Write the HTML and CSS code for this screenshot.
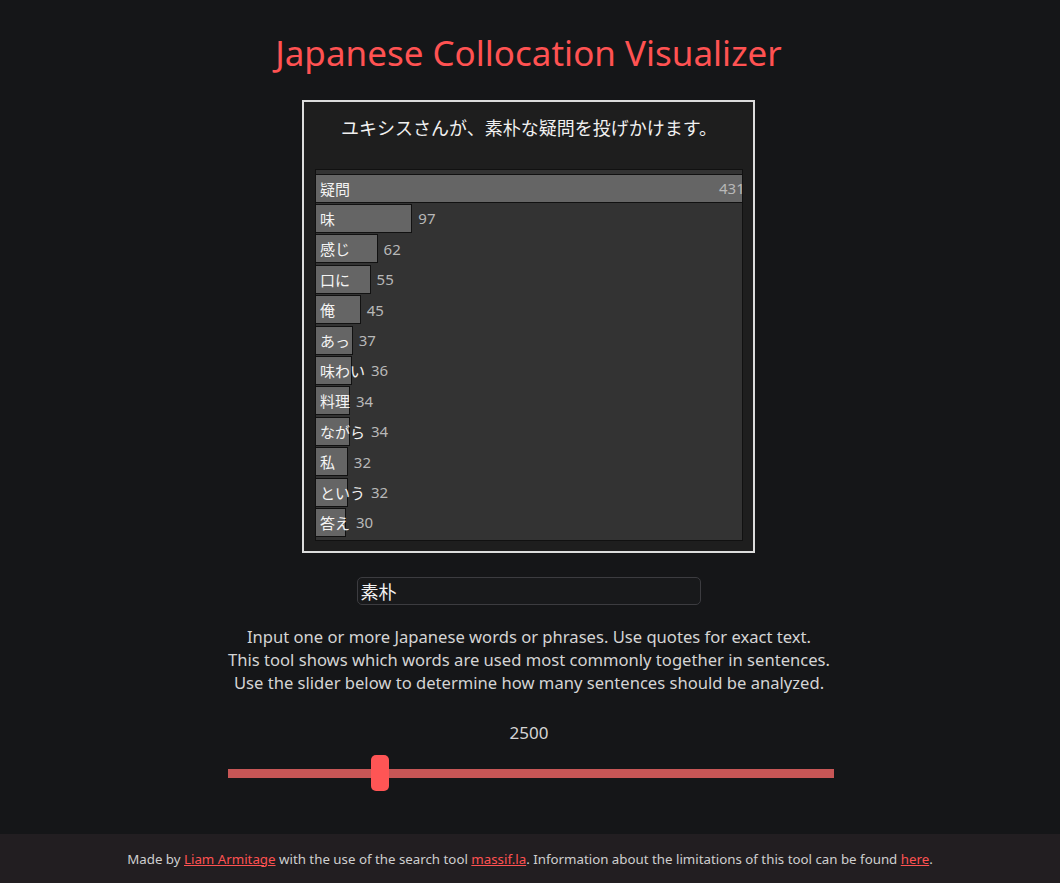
FILE: index.html
```html
<!DOCTYPE html>
<html lang="en">
<head>
<meta charset="utf-8">
<title>Japanese Collocation Visualizer</title>
<link rel="stylesheet" href="styles.css">
</head>
<body>
<main class="page">
  <h1 class="title">Japanese Collocation Visualizer</h1>
  <section class="card">
    <p class="sentence" lang="ja">ユキシスさんが、素朴な疑問を投げかけます。</p>
    <div class="chart" lang="ja">
      <div class="row row--full"><div class="item"><div class="bar" style="width:427px"></div><span class="label">疑問</span></div><span class="count">431</span></div>
      <div class="row"><div class="item"><div class="bar" style="width:96.3px"></div><span class="label">味</span></div><span class="count">97</span></div>
      <div class="row"><div class="item"><div class="bar" style="width:61.6px"></div><span class="label">感じ</span></div><span class="count">62</span></div>
      <div class="row"><div class="item"><div class="bar" style="width:54.6px"></div><span class="label">口に</span></div><span class="count">55</span></div>
      <div class="row"><div class="item"><div class="bar" style="width:44.7px"></div><span class="label">俺</span></div><span class="count">45</span></div>
      <div class="row"><div class="item"><div class="bar" style="width:36.7px"></div><span class="label">あっ</span></div><span class="count">37</span></div>
      <div class="row"><div class="item"><div class="bar" style="width:35.7px"></div><span class="label">味わい</span></div><span class="count">36</span></div>
      <div class="row"><div class="item"><div class="bar" style="width:33.8px"></div><span class="label">料理</span></div><span class="count">34</span></div>
      <div class="row"><div class="item"><div class="bar" style="width:33.8px"></div><span class="label">ながら</span></div><span class="count">34</span></div>
      <div class="row"><div class="item"><div class="bar" style="width:31.8px"></div><span class="label">私</span></div><span class="count">32</span></div>
      <div class="row"><div class="item"><div class="bar" style="width:31.8px"></div><span class="label">という</span></div><span class="count">32</span></div>
      <div class="row"><div class="item"><div class="bar" style="width:29.8px"></div><span class="label">答え</span></div><span class="count">30</span></div>
    </div>
  </section>
  <input class="search" type="text" value="素朴" lang="ja">
  <p class="help">Input one or more Japanese words or phrases. Use quotes for exact text.<br>This tool shows which words are used most commonly together in sentences.<br>Use the slider below to determine how many sentences should be analyzed.</p>
  <div class="amount">2500</div>
  <input class="slider" type="range" min="100" max="10000" value="2500">
</main>
<footer class="footer"><span>Made by <a href="#">Liam Armitage</a> with the use of the search tool <a href="#">massif.la</a>. Information about the limitations of this tool can be found <a href="#">here</a>.</span></footer>
</body>
</html>
```

FILE: styles.css
```css
html, body {
  margin: 0;
  padding: 0;
}
body {
  background: #151618;
  color: #d8d8d8;
  font-family: "Noto Sans", "Noto Sans CJK JP", sans-serif;
  min-height: 883px;
  display: flex;
  flex-direction: column;
}
.page {
  flex: 1;
  display: flex;
  flex-direction: column;
  align-items: center;
}
.title {
  margin: 29px 3px 0 0;
  height: 71px;
  font-weight: 400;
  font-size: 35px;
  line-height: 48px;
  color: #ff5252;
  font-variant-ligatures: none;
}
.card {
  box-sizing: border-box;
  width: 453px;
  height: 453px;
  margin-right: 3px;
  border: 2px solid #dcdcdc;
  background: #1e1e1e;
  padding: 0 10px 0 11px;
}
.sentence {
  margin: 12px 0 0;
  height: 55px;
  text-align: center;
  font-size: 18px;
  line-height: 26px;
  color: #f0f0f0;
  font-family: "Noto Sans CJK JP", sans-serif;
}
.chart {
  box-sizing: border-box;
  width: 428px;
  height: 372px;
  background: #333333;
  border: 1px solid #111;
  padding-top: 3.6px;
  display: flex;
  flex-direction: column;
  gap: 1.4px;
  font-family: "Noto Sans CJK JP", sans-serif;
}
.row {
  display: flex;
  align-items: center;
  height: 29px;
}
.item {
  display: grid;
  height: 29px;
}
.bar {
  grid-area: 1 / 1;
  box-sizing: border-box;
  height: 29px;
  background: #656565;
  border: 1px solid #111;
  border-left: none;
}
.label {
  grid-area: 1 / 1;
  align-self: center;
  padding-left: 4px;
  white-space: nowrap;
  font-size: 15px;
  color: #f4f4f4;
}
.count {
  margin-left: 6px;
  font-size: 15px;
  color: #b8b8b8;
  font-family: "Noto Sans", sans-serif;
}
.row--full .count {
  margin-left: -24px;
}
.search {
  box-sizing: border-box;
  margin: 24px 3px 0 0;
  width: 344px;
  height: 28px;
  background: #18191b;
  border: 1px solid #3c3c40;
  border-radius: 5px;
  color: #f2f2f2;
  font-size: 18px;
  font-family: "Noto Sans CJK JP", sans-serif;
  padding: 0 3px;
  outline: none;
}
.help {
  margin: 20px 2px 0 0;
  text-align: center;
  font-size: 16.6px;
  line-height: 23px;
  color: #d4d4d4;
}
.amount {
  margin: 27px 2px 0 0;
  font-size: 17px;
  line-height: 24px;
  color: #d4d4d4;
}
.slider {
  -webkit-appearance: none;
  appearance: none;
  margin: 10px 0 0 2px;
  width: 606px;
  height: 36px;
  background: transparent;
}
.slider::-webkit-slider-runnable-track {
  height: 9px;
  background: #c75656;
  border: none;
}
.slider::-webkit-slider-thumb {
  -webkit-appearance: none;
  appearance: none;
  width: 18px;
  height: 36px;
  border-radius: 5px;
  background: #ff5555;
  margin-top: -13.5px;
  border: none;
}
.footer {
  height: 49px;
  background: #221e21;
  color: #cfcfcf;
  font-size: 13.3px;
  display: flex;
  align-items: center;
  justify-content: center;
}
.footer a {
  color: #ff5252;
}
```
